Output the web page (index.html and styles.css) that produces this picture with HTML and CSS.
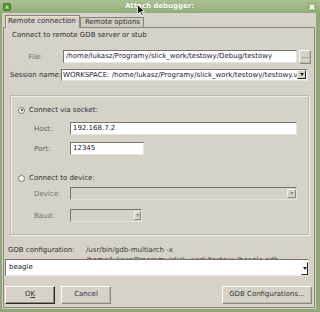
FILE: index.html
```html
<!DOCTYPE html>
<html>
<head>
<meta charset="utf-8">
<link rel="stylesheet" href="styles.css">
</head>
<body>
<div class="window">
  <div class="titlebar">
    <span class="app-icon"><svg width="8" height="8" viewBox="0 0 8 8"><rect x="0.5" y="0.5" width="7" height="7" rx="1.5" fill="#5d9c3c" stroke="#3f7a26"/><path d="M2 5.5 L4 2 L6 5.5 Z" fill="#b9e08f"/></svg></span>
    <span class="title">Attach debugger:</span>
    <span class="close"><svg width="8" height="8" viewBox="0 0 8 8"><rect x="0.5" y="0.5" width="7" height="7" fill="#b4ca9c" stroke="#8aa272"/><path d="M2 2 L6 6 M6 2 L2 6" stroke="#fff" stroke-width="1.3"/></svg></span>
    <svg class="cursor" width="8" height="13" viewBox="0 0 8 13"><path d="M0.5 0.5 L0.5 10.5 L3 8 L4.8 12 L6.2 11.4 L4.5 7.5 L7.5 7.5 Z" fill="#111" stroke="#fff" stroke-width="0.8"/></svg>
  </div>
  <div class="client">
    <div class="tabs">
      <div class="tab active">Remote connection</div>
      <div class="tab">Remote options</div>
    </div>
    <div class="frame">
      <div class="intro">Connect to remote GDB server or stub</div>
      <div class="row file-row">
        <span class="lbl lbl-file">File:</span>
        <div class="entry entry-file">/home/lukasz/Programy/slick_work/testowy/Debug/testowy</div>
        <div class="btn btn-dots">...</div>
      </div>
      <div class="row session-row">
        <span class="lbl lbl-session">Session name:</span>
        <div class="combo combo-session"><span class="val">WORKSPACE: /home/lukasz/Programy/slick_work/testowy/testowy.vm</span><span class="arrow dark"><i></i></span></div>
      </div>
      <div class="group">
        <div class="radio-row first"><span class="radio checked"></span><span>Connect via socket:</span></div>
        <div class="row sub-row host-row">
          <span class="sub-lbl">Host:</span>
          <div class="entry entry-host">192.168.7.2</div>
        </div>
        <div class="row sub-row port-row">
          <span class="sub-lbl">Port:</span>
          <div class="entry entry-port">12345</div>
        </div>
        <div class="radio-row second"><span class="radio"></span><span>Connect to device:</span></div>
        <div class="row sub-row device-row">
          <span class="sub-lbl disabled">Device:</span>
          <div class="combo disabled combo-device"><span class="val"></span><span class="arrow"><i></i></span></div>
        </div>
        <div class="row sub-row baud-row">
          <span class="sub-lbl disabled">Baud:</span>
          <div class="combo disabled combo-baud"><span class="val"></span><span class="arrow"><i></i></span></div>
        </div>
      </div>
      <div class="config-row">
        <span class="config-lbl">GDB configuration:</span>
        <span class="config-val">/usr/bin/gdb-multiarch -x<br>/home/lukasz/Programy/slick_work/testowy/beagle.gdb</span>
      </div>
      <div class="combo combo-beagle"><span class="val">beagle</span><span class="arrow dark"><i></i></span></div>
      <div class="buttons">
        <div class="btn btn-ok">O<u>K</u></div>
        <div class="btn btn-cancel">Cancel</div>
        <div class="spacer"></div>
        <div class="btn btn-config">GDB Configurations...</div>
      </div>
    </div>
  </div>
</div>
</body>
</html>
```

FILE: styles.css
```css
* { box-sizing: border-box; }
html, body { margin: 0; padding: 0; }
body {
  width: 320px;
  height: 312px;
  overflow: hidden;
  font-family: "DejaVu Sans", sans-serif;
  font-size: 7px;
  color: #303030;
  white-space: nowrap;
}
.window {
  width: 320px;
  height: 312px;
  display: flex;
  flex-direction: column;
  background: #8fa876;
}
.titlebar {
  height: 13px;
  flex: none;
  display: flex;
  align-items: center;
  justify-content: space-between;
  background: linear-gradient(#aac293, #93ad79);
  position: relative;
}
.app-icon { margin-left: 3px; width: 8px; height: 8px; display: flex; }
.close { margin-right: 4px; width: 8px; height: 8px; display: flex; }
.title {
  color: #fff;
  font-weight: bold;
  line-height: 13px;
  text-shadow: 0 0 1px rgba(60, 80, 40, 0.4);
}
.cursor { position: absolute; left: 137px; top: 4px; }

.client {
  flex: 1;
  margin: 0 4px 3px 2px;
  background: #d6d2ca;
  padding: 2px 1px 1px 1px;
  display: flex;
  flex-direction: column;
}
.tabs {
  height: 12px;
  flex: none;
  display: flex;
  align-items: flex-end;
  padding-left: 2px;
}
.tab {
  flex: none;
  border: 1px solid #8a867e;
  border-bottom: none;
  line-height: 9px;
  height: 10px;
  padding: 0 0 0 4px;
  background: #d0ccc4;
  color: #303030;
}
.tab.active {
  height: 13px;
  margin-bottom: -1px;
  position: relative;
  z-index: 1;
  background: #d6d2ca;
  line-height: 11px;
  width: 75px;
  padding: 0 0 0 2px;
  box-shadow: inset 1px 1px 0 #ede3bd;
}
.tab:not(.active) { width: 64px; }

.frame {
  flex: 1;
  border: 1px solid #8a867e;
  display: flex;
  flex-direction: column;
}
.intro {
  margin: 2px 0 0 8px;
  line-height: 10px;
}
.row { display: flex; align-items: center; }
.lbl { line-height: 10px; flex: none; }
.file-row { margin-top: 10px; padding-left: 6px; height: 13px; }
.lbl-file { width: 51px; text-align: center; color: #6a6a6a; }
.entry {
  flex: none;
  height: 13px;
  background: #fff;
  border: 1px solid;
  border-color: #77746e #e6e3dd #e6e3dd #77746e;
  line-height: 11px;
  padding-left: 2px;
  overflow: hidden;
  color: #222;
}
.entry-file { width: 234px; margin-left: 2px; color: #1e2030; }
.btn {
  flex: none;
  background: #d6d2ca;
  border: 1px solid;
  border-color: #fbfaf8 #8c8882 #8c8882 #fbfaf8;
  box-shadow: inset -1px -1px 0 #bcb8b0;
  text-align: center;
  color: #333;
}
.btn-dots {
  width: 12px;
  height: 14px;
  margin-left: 2px;
  line-height: 11px;
}
.session-row { margin-top: 6px; padding-left: 6px; height: 12px; }
.lbl-session { width: 51px; }
.combo {
  flex: none;
  display: flex;
  background: #fff;
  border: 1px solid;
  border-color: #77746e #e6e3dd #e6e3dd #77746e;
}
.combo .val {
  flex: 1;
  overflow: hidden;
  padding-left: 1px;
}
.combo .arrow {
  flex: none;
  width: 9px;
  background: #d6d2ca;
  border: 1px solid;
  border-color: #f4f2ee #8c8882 #8c8882 #f4f2ee;
  display: flex;
  align-items: center;
  justify-content: center;
}
.combo .arrow.dark { border-color: #f4f2ee #202020 #202020 #f4f2ee; }
.combo .arrow i {
  width: 0;
  height: 0;
  border-left: 2px solid transparent;
  border-right: 2px solid transparent;
  border-top: 3px solid #222;
}
.combo-session {
  width: 247px;
  height: 12px;
  line-height: 10px;
  color: #1e2030;
}
.combo-session .arrow { margin: 0 1px 1px 0; width: 9px; }

.group {
  margin: 14px 0 0 6px;
  width: 299px;
  height: 140px;
  border: 1px solid #bbb7af;
  box-shadow: inset 1px 1px 0 #f1efea, 1px 1px 0 #f1efea;
  display: flex;
  flex-direction: column;
}
.radio-row {
  display: flex;
  align-items: center;
  line-height: 10px;
  height: 10px;
  padding-left: 7px;
}
.radio-row.first { margin-top: 9px; }
.radio-row.second { margin-top: 18px; }
.radio {
  width: 7px;
  height: 7px;
  border-radius: 50%;
  border: 1px solid #77746e;
  background: #fbfbfa;
  margin-right: 4px;
  position: relative;
}
.radio.checked::after {
  content: "";
  position: absolute;
  left: 1.5px;
  top: 1.5px;
  width: 2px;
  height: 2px;
  border-radius: 50%;
  background: #222;
}
.sub-row { padding-left: 23px; }
.sub-lbl { flex: none; width: 36px; line-height: 10px; color: #5e5e5e; }
.sub-lbl.disabled { color: #707070; }
.host-row { margin-top: 7px; }
.entry-host { width: 227px; }
.port-row { margin-top: 7px; }
.entry-port { width: 74px; }
.device-row { margin-top: 4px; }
.combo.disabled { background: #d6d2ca; height: 13px; }
.combo-device { width: 227px; }
.combo-device .arrow { width: 9px; margin: 1px 0 1px 0; }
.baud-row { margin-top: 9px; }
.combo-baud { width: 72px; }
.combo-baud .arrow { width: 7px; margin: 1px 0; }
.combo.disabled .arrow i { border-top-color: #999; }

.config-row {
  margin-top: 10px;
  height: 14px;
  overflow: hidden;
  display: flex;
  line-height: 10px;
  padding-left: 4px;
}
.config-lbl { flex: none; width: 78px; }
.config-val { color: #3a3a3a; }
.combo-beagle {
  margin-left: 1px;
  width: 304px;
  height: 17px;
  line-height: 14px;
  color: #222;
}
.combo-beagle .val { padding-left: 3px; }
.combo-beagle .arrow { margin: 2px 0 0 0; height: 13px; width: 7px; border-color: #fff #d6d2ca #111 #fff; background: #fff; }

.buttons {
  display: flex;
  margin-top: 10px;
  padding-left: 1px;
  height: 18px;
}
.buttons .btn { height: 18px; line-height: 15px; }
.btn-ok {
  width: 50px;
  border-color: #fbfaf8 #2a2a2a #2a2a2a #fbfaf8;
  box-shadow: inset -1px -1px 0 #8c8882;
}
.btn-cancel { width: 50px; margin-left: 6px; }
.spacer { flex: 1; }
.btn-config { width: 90px; margin-right: 2px; }
```
